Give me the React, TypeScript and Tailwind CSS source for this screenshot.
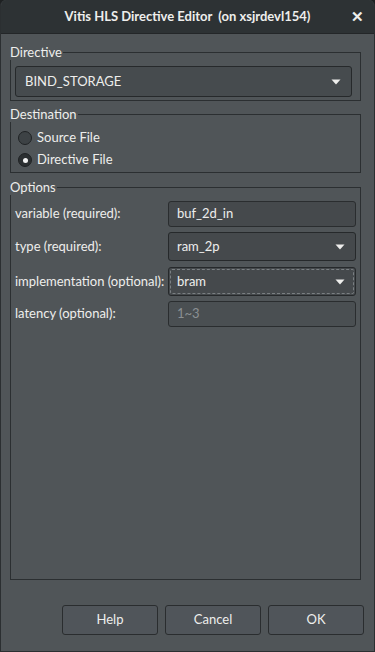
import React from 'react';

const font = { fontFamily: 'Lato, "Noto Sans", sans-serif' };

const Arrow = () => (
  <svg width="10" height="6" viewBox="0 0 10 6" className="shrink-0">
    <path d="M0.5 0.5 L9.5 0.5 L5 5.5 Z" fill="#eeeeec" />
  </svg>
);

const Radio = ({ checked, label }: { checked?: boolean; label: string }) => (
  <div className="flex items-center h-[22px] pl-[7px]">
    <div
      className={`w-[14px] h-[14px] rounded-full border border-[#1f2224] flex items-center justify-center ${
        checked ? 'bg-[#2b2f31]' : 'bg-[#3d4245]'
      }`}
    >
      {checked && <div className="w-[5px] h-[5px] rounded-full bg-[#f2f2f2]" />}
    </div>
    <span className="ml-[5px] text-[13px] text-[#eeeeec]">{label}</span>
  </div>
);

const Frame = ({ title, className, children }: { title: string; className?: string; children: React.ReactNode }) => (
  <fieldset className={`border border-[#2b2f31] ml-[9px] mr-[13px] ${className ?? ''}`}>
    <legend className="-ml-px pr-[1px] text-[13px] leading-[16px] text-[#eeeeec]">{title}</legend>
    {children}
  </fieldset>
);

const Row = ({ label, children, h }: { label: string; children: React.ReactNode; h: string }) => (
  <div className={`flex items-center ${h}`}>
    <span className="w-[153px] text-[13px] text-[#eeeeec]">{label}</span>
    <div className="flex-1 h-full">{children}</div>
  </div>
);

export default function App() {
  return (
    <div className="w-[375px] h-[652px] bg-[#1e2122]" style={font}>
      <div className="w-full h-full flex flex-col bg-[#505558] border-x border-b border-[#2b2f31] rounded-t-[6px] overflow-hidden">
        {/* Title bar */}
        <div className="h-[34px] shrink-0 bg-[#2d3234] border-b border-[#232628] flex items-center relative">
          <div className="flex-1 text-center text-[13px] font-bold text-[#eeeeec]">
            Vitis HLS Directive Editor&nbsp;&nbsp;(on xsjrdevl154)
          </div>
          <div className="absolute right-[10px] top-[9px] text-[#eeeeec] text-[15px] leading-[15px] font-bold">✕</div>
        </div>

        <Frame title="Directive" className="mt-[10px]">
          <div className="pl-[4px] pr-[8px] pt-[6px] pb-[3px]">
            <div className="h-[31px] bg-[#464b4e] border border-[#26292b] rounded-[3px] flex items-center justify-between pl-[9px] pr-[10px]">
              <span className="text-[13px] text-[#eeeeec]">BIND_STORAGE</span>
              <Arrow />
            </div>
          </div>
        </Frame>

        <Frame title="Destination" className="mt-[5px]">
          <div className="pt-[5px] pb-[1px]">
            <Radio label="Source File" />
            <Radio label="Directive File" checked />
          </div>
        </Frame>

        <Frame title="Options" className="mt-[6px] flex-1">
          <div className="pl-[4px] pr-[4px] pt-[6px] flex flex-col">
            <Row label="variable (required):" h="h-[26px]">
              <div className="h-full bg-[#45494c] border border-[#2a2d2f] rounded-[3px] flex items-center px-[8px] text-[13px] text-[#eeeeec]">
                buf_2d_in
              </div>
            </Row>
            <div className="mt-[5px]">
              <Row label="type (required):" h="h-[29px]">
                <div className="h-full bg-[#45494c] border border-[#26292b] rounded-[3px] flex items-center justify-between pl-[8px] pr-[10px] text-[13px] text-[#eeeeec]">
                  <span>ram_2p</span>
                  <Arrow />
                </div>
              </Row>
            </div>
            <div className="mt-[6px]">
              <Row label="implementation (optional):" h="h-[29px]">
                <div className="h-full bg-[#45494c] border border-[#26292b] rounded-[3px] p-[1px]">
                  <div className="h-full border border-dashed border-[#7a7f82] rounded-[2px] flex items-center justify-between pl-[6px] pr-[8px] text-[13px] text-[#eeeeec]">
                    <span>bram</span>
                    <Arrow />
                  </div>
                </div>
              </Row>
            </div>
            <div className="mt-[5px]">
              <Row label="latency (optional):" h="h-[26px]">
                <div className="h-full bg-[#4a4f52] border border-[#2a2d2f] rounded-[3px] flex items-center px-[8px] text-[13px] text-[#8b9093]">
                  1~3
                </div>
              </Row>
            </div>
          </div>
        </Frame>

        {/* Buttons */}
        <div className="h-[71px] shrink-0 flex items-start justify-end gap-[7px] pt-[25px] pr-[10px]">
          {['Help', 'Cancel', 'OK'].map((b) => (
            <div
              key={b}
              className="w-[96px] h-[30px] border border-[#2a2d2f] rounded-[3px] bg-[#50555a] flex items-center justify-center text-[13px] text-[#eeeeec]"
            >
              {b}
            </div>
          ))}
        </div>
      </div>
    </div>
  );
}
